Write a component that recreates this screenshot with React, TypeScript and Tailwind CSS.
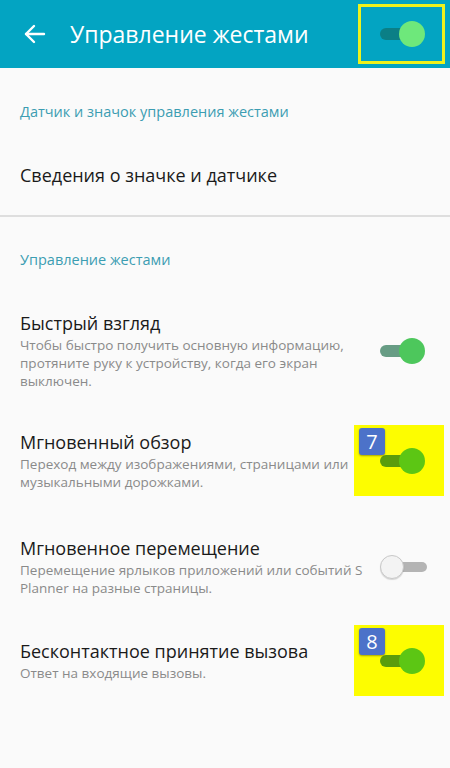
import React from "react";

type ToggleKind = "on" | "off" | "hl" | "head";

function Toggle({ kind }: { kind: ToggleKind }) {
  if (kind === "off") {
    return (
      <div className="flex items-center">
        <div className="relative z-10 w-[24px] h-[24px] rounded-full bg-[#f3f3f3] border border-[#c8c8c8] shadow-[0_1px_1px_rgba(0,0,0,0.15)]" />
        <div className="-ml-[10px] w-[33px] h-[10px] rounded-full bg-[#b4b4b4]" />
      </div>
    );
  }
  const track =
    kind === "hl" ? "bg-[#5a9c0c]" : kind === "head" ? "bg-[#0b7f86]" : "bg-[#679c84]";
  const thumb =
    kind === "hl" ? "bg-[#5cc614]" : kind === "head" ? "bg-[#6ee87b]" : "bg-[#4dc75c]";
  return (
    <div className="flex items-center">
      <div className={`w-[36px] h-[12px] rounded-full ${track}`} />
      <div className={`-ml-[17px] w-[26px] h-[26px] rounded-full ${thumb}`} />
    </div>
  );
}

function ToggleBox({ kind, badge }: { kind: ToggleKind; badge?: string }) {
  if (badge) {
    return (
      <div className="relative w-[90px] h-[71px] bg-[#fdfd00] flex items-center pl-[26px] shrink-0">
        <div className="absolute left-[5px] top-[3px] w-[26px] h-[27px] rounded-[3px] bg-[#4c72c9] shadow-[0_1px_2px_rgba(0,0,0,0.35)] flex items-center justify-center text-white text-[20px] leading-none">
          {badge}
        </div>
        <Toggle kind={kind} />
      </div>
    );
  }
  return (
    <div className="w-[90px] flex items-center pl-[26px] shrink-0">
      <Toggle kind={kind} />
    </div>
  );
}

function Row({
  title,
  lines,
  kind,
  badge,
  mt,
}: {
  title: string;
  lines: string[];
  kind: ToggleKind;
  badge?: string;
  mt: string;
}) {
  return (
    <div className={`flex items-center pl-5 pr-[6px] ${mt}`}>
      <div className="flex-1 min-w-0 flex flex-col gap-[1px]">
        <div className="text-[18px] leading-[24px] text-[#1a1a1a] whitespace-nowrap">{title}</div>
        <div className="text-[13.5px] leading-[18px] text-[#8a8a8a]">
          {lines.map((l, i) => (
            <div key={i} className="whitespace-nowrap">{l}</div>
          ))}
        </div>
      </div>
      <ToggleBox kind={kind} badge={badge} />
    </div>
  );
}

export default function App() {
  return (
    <div className="w-[450px] h-[768px] bg-[#fafafa] overflow-hidden" style={{ fontFamily: "'Open Sans', 'Noto Sans', sans-serif" }}>
      <div className="h-[68px] bg-[#03a4c2] flex items-center pl-[23px] pr-[5px]">
        <svg width="24" height="24" viewBox="0 0 24 24" fill="none" stroke="white" strokeWidth="2.4" strokeLinecap="round" strokeLinejoin="round">
          <path d="M21 12H3" />
          <path d="M11 4l-8 8 8 8" />
        </svg>
        <div className="ml-[23px] flex-1 text-white text-[23px] leading-none">Управление жестами</div>
        <div className="w-[87px] h-[60px] border-[3px] border-[#eef21c] flex items-center pl-[19px]">
          <Toggle kind="head" />
        </div>
      </div>

      <div className="pt-[34px] pl-5 text-[14.5px] leading-[20px] text-[#3c9db2]">Датчик и значок управления жестами</div>
      <div className="mt-[41px] pl-5 pb-[28px] text-[18px] leading-[24px] text-[#1a1a1a]">Сведения о значке и датчике</div>
      <div className="h-[2px] bg-[#dedede]" />

      <div className="pt-[33px] pl-5 text-[14.5px] leading-[20px] text-[#3c9db2]">Управление жестами</div>

      <Row
        mt="mt-[41px]"
        title="Быстрый взгляд"
        lines={["Чтобы быстро получить основную информацию,", "протяните руку к устройству, когда его экран", "выключен."]}
        kind="on"
      />
      <Row
        mt="mt-[35px]"
        title="Мгновенный обзор"
        lines={["Переход между изображениями, страницами или", "музыкальными дорожками."]}
        kind="hl"
        badge="7"
      />
      <Row
        mt="mt-[40px]"
        title="Мгновенное перемещение"
        lines={["Перемещение ярлыков приложений или событий S", "Planner на разные страницы."]}
        kind="off"
      />
      <Row
        mt="mt-[28px]"
        title="Бесконтактное принятие вызова"
        lines={["Ответ на входящие вызовы."]}
        kind="hl"
        badge="8"
      />
    </div>
  );
}
